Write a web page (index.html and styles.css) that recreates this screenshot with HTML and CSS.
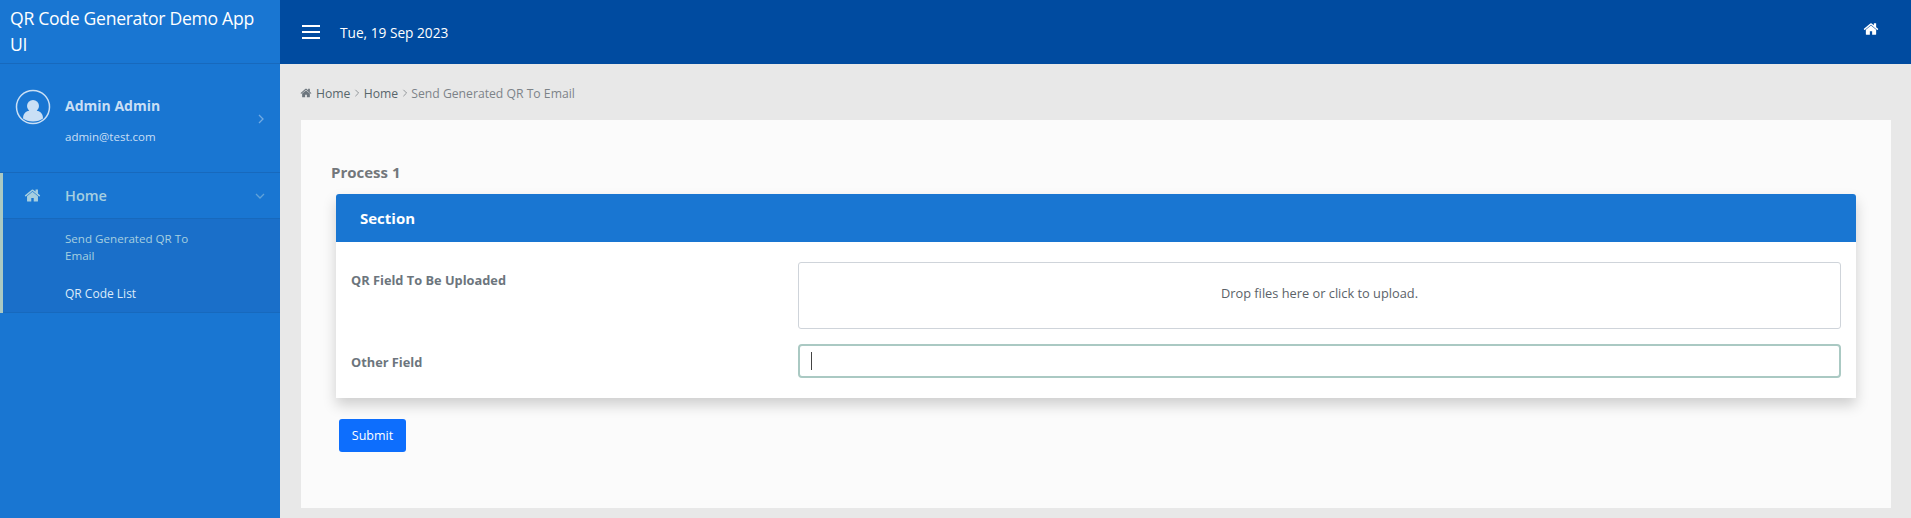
FILE: index.html
```html
<!DOCTYPE html>
<html lang="en">

<head>
  <meta charset="UTF-8">
  <title>QR Code Generator Demo App UI</title>
  <link rel="stylesheet" href="styles.css">
</head>

<body>
  <svg class="defs" width="0" height="0">
    <symbol id="home" viewBox="0 0 1792 1792">
      <path d="M1472 992v480q0 26-19 45t-45 19h-384v-384h-256v384h-384q-26 0-45-19t-19-45v-480q0-1 .5-3t.5-3l575-474 575 474q1 2 1 6zm223-69l-62 74q-8 9-21 11h-3q-13 0-21-7l-692-577-692 577q-12 8-24 7-13-2-21-11l-62-74q-8-10-7-23.500t11-21.500l719-599q32-26 76-26t76 26l244 204v-195q0-14 9-23t23-9h192q14 0 23 9t9 23v408l219 182q10 8 11 21.500t-7 23.500z" />
    </symbol>
  </svg>

  <div class="app">
    <aside class="sidebar">
      <div class="brand">QR Code Generator Demo App UI</div>

      <div class="user">
        <svg class="avatar" viewBox="0 0 36 36">
          <circle cx="18" cy="18" r="16.500" fill="none" stroke="currentColor" stroke-width="1.500" />
          <circle cx="18" cy="17" r="6" fill="currentColor" />
          <path d="M8 29.500c0-5 3-7.500 6-7.500h8c3 0 6 2.500 6 7.500q-4 3-10 3t-10-3z" fill="currentColor" />
        </svg>
        <div class="user-info">
          <div class="user-name">Admin Admin</div>
          <div class="user-mail">admin@test.com</div>
        </div>
        <svg class="chevron" viewBox="0 0 10 10"><path d="M3 1l4 4-4 4" /></svg>
      </div>

      <nav class="menu">
        <div class="menu-head">
          <svg class="menu-icon"><use href="#home" /></svg>
          <span class="menu-label">Home</span>
          <svg class="chevron down" viewBox="0 0 10 10"><path d="M1 3l4 4 4-4" /></svg>
        </div>
        <ul class="submenu">
          <li class="submenu-item">Send Generated QR To Email</li>
          <li class="submenu-item active">QR Code List</li>
        </ul>
      </nav>
    </aside>

    <div class="main">
      <header class="topbar">
        <div class="burger"><span></span><span></span><span></span></div>
        <div class="date">Tue, 19 Sep 2023</div>
        <svg class="top-home"><use href="#home" /></svg>
      </header>

      <main class="content">
        <div class="crumbs">
          <svg class="crumb-icon"><use href="#home" /></svg>
          <span class="crumb-link">Home</span>
          <svg class="crumb-sep" viewBox="0 0 10 10"><path d="M3 1l4 4-4 4" /></svg>
          <span class="crumb-link">Home</span>
          <svg class="crumb-sep" viewBox="0 0 10 10"><path d="M3 1l4 4-4 4" /></svg>
          <span>Send Generated QR To Email</span>
        </div>

        <section class="panel">
          <h2 class="process">Process 1</h2>

          <form class="card">
            <div class="card-head">Section</div>
            <div class="card-body">
              <div class="row">
                <label class="field-label">QR Field To Be Uploaded</label>
                <div class="dropzone">Drop files here or click to upload.</div>
              </div>
              <div class="row">
                <label class="field-label">Other Field</label>
                <div class="text-input"><span class="caret"></span></div>
              </div>
            </div>
          </form>

          <button class="btn" type="button">Submit</button>
        </section>
      </main>
    </div>
  </div>
</body>

</html>
```

FILE: styles.css
```css
:root {
  --blue: #1976d2;
  --blue-dark: #1a6fc9;
  --line: #1769bd;
  --navy: #004ba0;
  --muted: #6c757d;
  --mint: #aac9c3;
  --pale: #c9dff5;
}

* {
  box-sizing: border-box;
}

html,
body {
  height: 100%;
}

body {
  margin: 0;
  overflow: hidden;
  font-family: "Open Sans", "Noto Sans", sans-serif;
  font-size: 13px;
  color: var(--muted);
  background: #e8e8e8;
}

.defs {
  display: block;
  height: 0;
}

.app {
  display: flex;
  height: 518px;
}

/* sidebar */
.sidebar {
  width: 280px;
  flex: none;
  background: var(--blue);
  color: white;
}

.brand {
  height: 64px;
  padding: 5px 10px 0;
  border-bottom: 1px solid var(--line);
  font-size: 17.600px;
  letter-spacing: -0.3px;
  line-height: 26px;
}

.user {
  display: flex;
  align-items: center;
  height: 109px;
  padding: 0 15px;
  border-bottom: 1px solid var(--line);
  color: var(--pale);
}

.avatar {
  width: 36px;
  height: 36px;
  margin: -22px 14px 0 0;
  flex: none;
}

.user-info {
  flex: 1;
  padding-top: 4px;
}

.user-name {
  font-size: 14px;
  font-weight: 700;
}

.user-mail {
  margin-top: 14px;
  font-size: 11.500px;
}

.chevron {
  width: 10px;
  height: 10px;
  flex: none;
  fill: none;
  stroke: currentColor;
  stroke-width: 1.300;
  opacity: 0.5;
  transform: translate(1px, 1px);
}

.chevron.down {
  transform: none;
}

.menu {
  border-left: 3px solid var(--mint);
  color: #a6cfe0;
}

.menu-head {
  display: flex;
  align-items: center;
  height: 46px;
  padding: 0 15px 0 21px;
  border-bottom: 1px solid var(--line);
}

.menu-icon {
  width: 17px;
  height: 17px;
  margin-right: 24px;
  fill: currentColor;
}

.menu-label {
  flex: 1;
  font-size: 14.500px;
  font-weight: 600;
}

.submenu {
  margin: 0;
  padding: 11px 0 10px;
  list-style: none;
  background: var(--blue-dark);
  border-bottom: 1px solid var(--line);
}

.submenu-item {
  width: 140px;
  margin-left: 62px;
  font-size: 11.600px;
  line-height: 17px;
}

.submenu-item.active {
  margin-top: 21px;
  font-size: 12px;
  color: #dcebfa;
}

/* top bar */
.main {
  flex: 1;
  display: flex;
  flex-direction: column;
  min-width: 0;
}

.topbar {
  display: flex;
  align-items: center;
  height: 64px;
  flex: none;
  padding: 0 32px 0 22px;
  background: var(--navy);
  color: white;
}

.burger {
  display: flex;
  flex-direction: column;
  gap: 4px;
  width: 18px;
  margin-right: 20px;
}

.burger span {
  height: 2px;
  background: white;
}

.date {
  flex: 1;
  padding-top: 1px;
  font-size: 13.700px;
}

.top-home {
  width: 16px;
  height: 16px;
  margin-top: -6px;
  fill: white;
}

/* content */
.content {
  flex: 1;
  padding: 19px 20px 10px 20px;
}

.crumbs {
  display: flex;
  align-items: center;
  height: 20px;
  font-size: 12.200px;
  color: #7d8388;
}

.crumb-icon {
  width: 12px;
  height: 12px;
  margin-right: 4px;
  fill: var(--muted);
}

.crumb-link {
  color: #58666b;
}

.crumb-sep {
  width: 8px;
  height: 8px;
  margin: 0 2.600px;
  fill: none;
  stroke: currentColor;
}

.panel {
  height: 388px;
  margin-top: 17px;
  margin-left: 1px;
  padding: 43px 35px 0;
  background: #fbfbfb;
}

.process {
  margin: 0 0 12px -5px;
  font-size: 15px;
  line-height: 19px;
  font-weight: 700;
  color: #73777b;
}

.card {
  display: block;
  background: white;
  border-radius: 3px 3px 0 0;
  box-shadow: 0 7px 14px rgba(0, 0, 0, 0.18);
}

.card-head {
  height: 48px;
  padding-left: 24px;
  border-radius: 3px 3px 0 0;
  background: var(--blue);
  color: white;
  font-size: 15px;
  font-weight: 700;
  line-height: 48px;
}

.card-body {
  padding: 20px 15px;
}

.row {
  display: flex;
}

.row + .row {
  margin-top: 15px;
}

.field-label {
  width: 447px;
  flex: none;
  padding-top: 9px;
  font-size: 12.800px;
  font-weight: 700;
  color: var(--muted);
}

.dropzone {
  flex: 1;
  height: 67px;
  border: 1px solid #cfd4da;
  border-radius: 3px;
  font-size: 12.800px;
  line-height: 61px;
  text-align: center;
  color: #5b6268;
}

.text-input {
  flex: 1;
  display: flex;
  align-items: center;
  height: 34px;
  padding-left: 11px;
  border: 2px solid var(--mint);
  border-radius: 4px;
}

.caret {
  width: 1px;
  height: 18px;
  background: #444;
}

.btn {
  display: block;
  width: 67px;
  height: 33px;
  margin: 21px 0 0 3px;
  padding: 0;
  border: 0;
  border-radius: 3px;
  background: #0d6efd;
  color: white;
  font: inherit;
  font-size: 12.500px;
}
```
